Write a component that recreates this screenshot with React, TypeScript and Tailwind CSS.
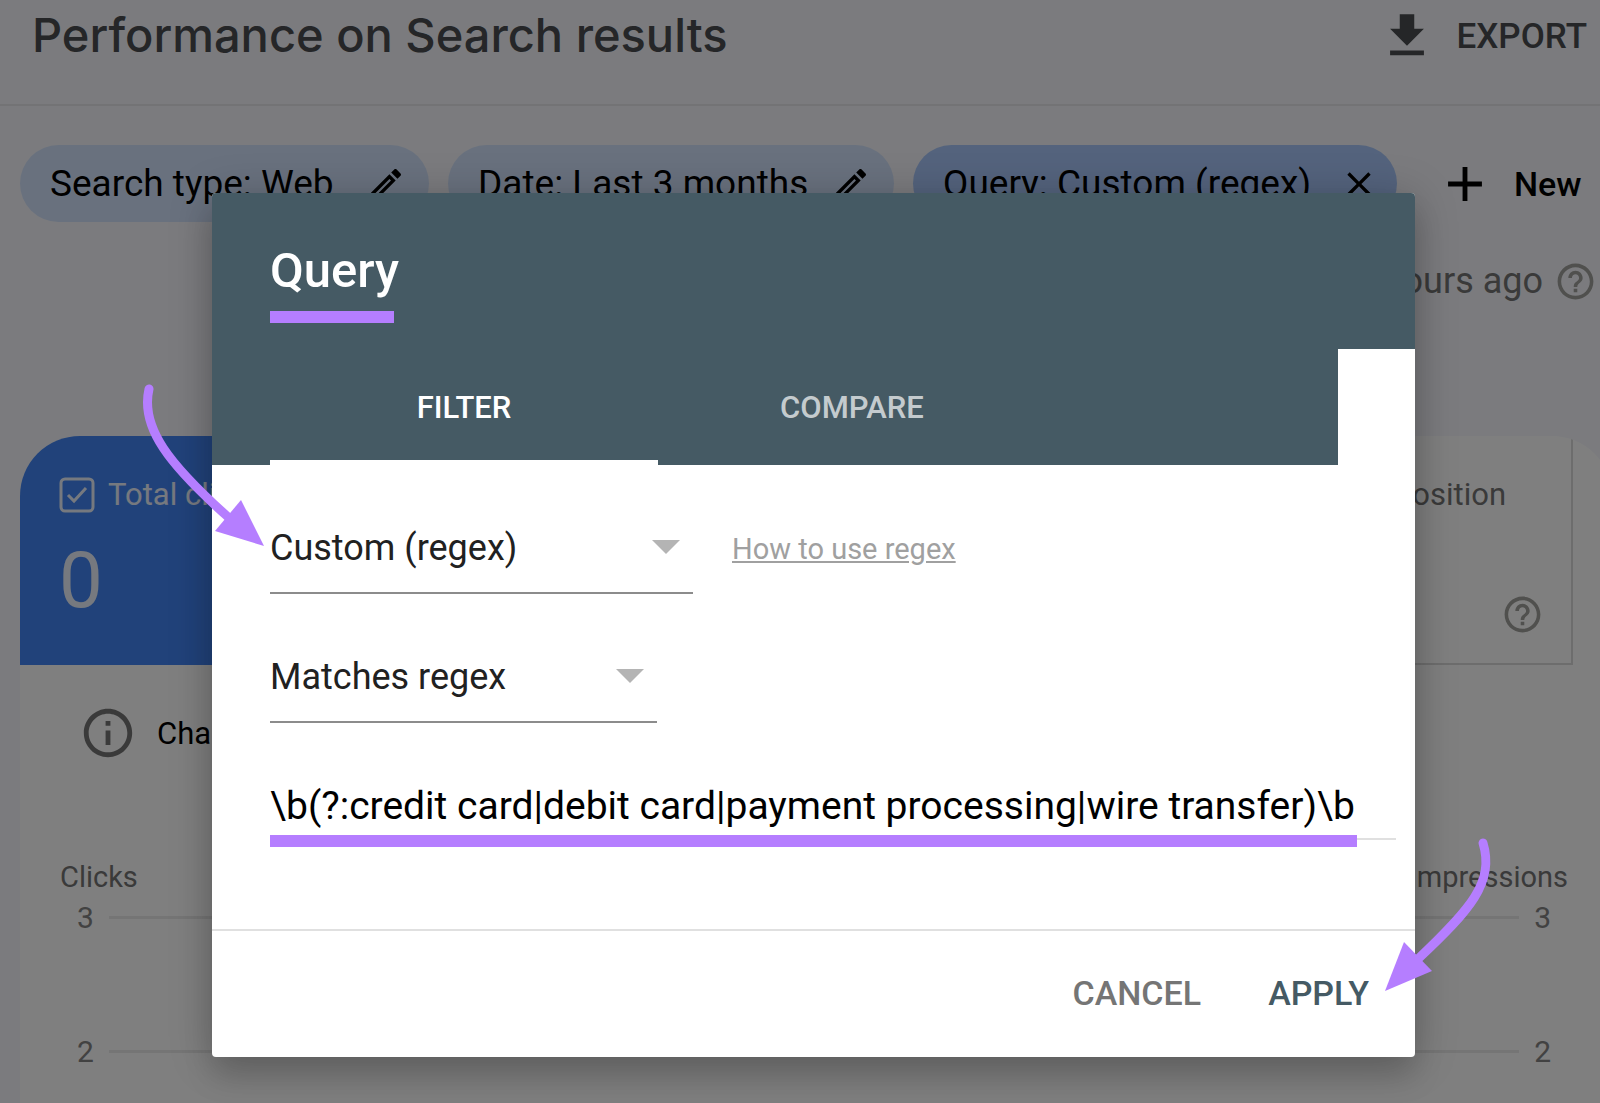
import React, { useState } from 'react';
import clsx from 'clsx';

const filters = [
  { id: 'type', label: 'Search type: Web', width: 'w-[409px] pr-[23px]', icon: 'edit' },
  { id: 'date', label: 'Date: Last 3 months', width: 'w-[446px] pr-[23px]', icon: 'edit' },
  { id: 'query', label: 'Query: Custom (regex)', width: 'w-[484px] pr-[18px]', icon: 'close' },
];

const tabs = [
  { id: 'filter', label: 'FILTER' },
  { id: 'compare', label: 'COMPARE' },
];

const icons = {
  download: 'M19 9h-4V3H9v6H5l7 7 7-7zM5 18v2h14v-2H5z',
  edit: 'M14.06 9.02l.92.92L5.92 19H5v-.92l9.06-9.06M17.66 3c-.25 0-.51.1-.7.29l-1.83 1.83 3.75 3.75 1.83-1.83c.39-.39.39-1.02 0-1.41l-2.34-2.34c-.2-.2-.45-.29-.71-.29zm-3.6 3.19L3 17.25V21h3.75L17.81 9.94l-3.75-3.75z',
  close: 'M19 6.41L17.59 5 12 10.59 6.41 5 5 6.41 10.59 12 5 17.59 6.41 19 12 13.41 17.59 19 19 17.59 13.41 12z',
  plus: 'M19 13h-6v6h-2v-6H5v-2h6V5h2v6h6v2z',
  help: 'M11 18h2v-2h-2v2zm1-16C6.48 2 2 6.48 2 12s4.48 10 10 10 10-4.48 10-10S17.52 2 12 2zm0 18c-4.41 0-8-3.59-8-8s3.59-8 8-8 8 3.59 8 8-3.59 8-8 8zm0-14c-2.21 0-4 1.79-4 4h2c0-1.1.9-2 2-2s2 .9 2 2c0 2-3 1.75-3 5h2c0-2.25 3-2.5 3-5 0-2.21-1.79-4-4-4z',
  info: 'M11 7h2v2h-2zm0 4h2v6h-2zm1-9C6.48 2 2 6.48 2 12s4.48 10 10 10 10-4.48 10-10S17.52 2 12 2zm0 18c-4.41 0-8-3.59-8-8s3.59-8 8-8 8 3.59 8 8-3.59 8-8 8z',
};

function Icon({ name, className }: { name: string; className?: string }) {
  return (
    <svg viewBox="0 0 24 24" fill="currentColor" className={clsx('shrink-0', className)} aria-hidden="true">
      <path d={icons[name as keyof typeof icons]} />
    </svg>
  );
}

interface SelectFieldProps {
  label: string;
  value: string;
  options: string[];
  className: string;
  onChange: (value: string) => void;
}

function SelectField({ label, value, options, className, onChange }: SelectFieldProps) {
  return (
    <div className={clsx('relative', className)}>
      <select
        aria-label={label}
        value={value}
        onChange={(e) => onChange(e.target.value)}
        className="h-[92px] w-full appearance-none border-b-2 border-[#8c8c8c] bg-transparent pt-0.5 text-[36px] text-[#212121] outline-none"
      >
        {options.map((option) => (
          <option key={option}>{option}</option>
        ))}
      </select>
      <svg
        viewBox="0 0 28 14"
        className="pointer-events-none absolute right-[13px] top-[38px] h-[14px] w-7"
        aria-hidden="true"
      >
        <path d="M0 0h28L14 14z" fill="#b4b4b4" />
      </svg>
    </div>
  );
}

function AxisRow({ value }: { value: number }) {
  return (
    <div className="flex h-9 items-center gap-[15px] pl-[57px] pr-[61px] text-[30px] text-[#858585]">
      <span>{value}</span>
      <div className="h-[3px] flex-1 bg-[#ebebeb]" />
      <span>{value}</span>
    </div>
  );
}

function Report() {
  return (
    <div className="flex h-full flex-col bg-[#f6f7fc]">
      <header className="flex h-[106px] items-start justify-between border-b-2 border-[#e6e7ea] pl-8 pr-[13px] text-[#4a4c50]">
        <h1 className="pt-[3px] font-[Inter] text-[47px] font-medium leading-[64px]">Performance on Search results</h1>
        <button className="flex items-center gap-[21px] pt-[7px] text-[35px] font-medium">
          <Icon name="download" className="size-[58px]" />
          <span className="pt-0.5">EXPORT</span>
        </button>
      </header>

      <div className="mt-[39px] flex items-center gap-[19px] pl-5">
        {filters.map(({ id, label, width, icon }) => (
          <button
            key={id}
            className={clsx(
              'flex h-[77px] shrink-0 items-center justify-between rounded-full pl-[30px] text-[37px] text-black',
              width,
              id === 'query' ? 'bg-[#a8c7fa]' : 'bg-[#d3e3fd]'
            )}
          >
            <span className="whitespace-nowrap">{label}</span>
            <Icon name={icon} className="size-10" />
          </button>
        ))}
        <button className="ml-5 flex shrink-0 items-center gap-5 text-[34px] font-medium text-black">
          <Icon name="plus" className="size-[58px]" />
          <span className="pt-0.5">New</span>
        </button>
      </div>

      <div className="mt-[37px] flex items-center justify-end gap-[11px] pr-[3px] text-[36px] leading-[44px] text-[#757575]">
        <span>Last updated: 4 hours ago</span>
        <Icon name="help" className="size-[43px] text-[#a0a09c]" />
      </div>

      <main className="-mr-3 ml-5 mt-[133px] flex-1 overflow-hidden rounded-t-[60px] bg-white">
        <div className="mr-[39px] grid h-[229px] grid-cols-4">
          <section className="bg-[#4285f4] pl-[39px] pt-[37px] text-white/90">
            <div className="flex items-center gap-[13px] text-[31px] leading-[44px]">
              <svg viewBox="0 0 36 36" className="size-9" fill="none" stroke="currentColor" strokeWidth="3" aria-hidden="true">
                <rect x="2" y="2" width="32" height="32" rx="4" />
                <path d="M9 18l6 6 12-13" />
              </svg>
              <h2>Total clicks</h2>
            </div>
            <p className="mt-[18px] text-[78px] leading-[92px]">0</p>
          </section>
          <section className="col-span-3 flex flex-col items-end justify-between border-b-2 border-r-2 border-[#dadada] pb-[27px] pr-[27px] pt-[37px] text-[#757575]">
            <h2 className="pr-[38px] text-[31px] leading-[44px]">Average position</h2>
            <Icon name="help" className="size-[43px] text-[#a0a09c]" />
          </section>
        </div>

        <div className="mt-[39px] flex items-center gap-5 pl-[59px] text-[31px]">
          <Icon name="info" className="size-[58px] text-[#757575]" />
          <span className="pt-0.5">Chart</span>
        </div>

        <div className="mt-[97px] flex justify-between pl-10 pr-11 text-[29px] leading-9 text-[#757575]">
          <span>Clicks</span>
          <span>Impressions</span>
        </div>
        <div className="mt-1 flex flex-col gap-[98px]">
          <AxisRow value={3} />
          <AxisRow value={2} />
        </div>
      </main>
    </div>
  );
}

function QueryDialog() {
  const [activeTab, setActiveTab] = useState('filter');
  const [kind, setKind] = useState('Custom (regex)');
  const [match, setMatch] = useState('Matches regex');
  const [pattern, setPattern] = useState(
    '\\b(?:credit card|debit card|payment processing|wire transfer)\\b'
  );

  return (
    <div
      role="dialog"
      aria-labelledby="dialog-title"
      className="w-[1203px] overflow-hidden rounded bg-white shadow-[0_22px_30px_0_rgba(0,0,0,0.12),0_4px_44px_rgba(0,0,0,0.22)]"
    >
      <div className="bg-[#455a64] pb-[26px] pl-[58px] pt-[50px]">
        <h2 id="dialog-title" className="text-[49px] font-medium leading-[56px] text-white">
          Query
        </h2>
        <div className="mt-3 h-3 w-[124px] bg-[#b57eff]" />
      </div>

      <div role="tablist" className="mr-[77px] flex h-[116px] bg-[#455a64] pl-[58px]">
        {tabs.map(({ id, label }) => (
          <button
            key={id}
            role="tab"
            aria-selected={activeTab === id}
            onClick={() => setActiveTab(id)}
            className={clsx(
              'w-[388px] border-b-[5px] pt-2 text-[31px] font-medium',
              activeTab === id ? 'border-white text-white' : 'border-transparent text-white/70'
            )}
          >
            {label}
          </button>
        ))}
      </div>

      <div className="pb-[89px] pl-[58px] pr-[19px] pt-[37px]">
        <div className="flex items-center gap-[39px]">
          <SelectField
            label="Filter type"
            value={kind}
            options={['Custom (regex)', 'Queries containing', 'Exact query']}
            className="w-[423px]"
            onChange={setKind}
          />
          <a href="#regex" className="pt-1 text-[29px] text-[#a0a0a0] underline">
            How to use regex
          </a>
        </div>
        <SelectField
          label="Match mode"
          value={match}
          options={['Matches regex', "Doesn't match regex"]}
          className="mt-[37px] w-[387px]"
          onChange={setMatch}
        />
        <div className="relative mt-[49px]">
          <input
            aria-label="Regular expression"
            value={pattern}
            onChange={(e) => setPattern(e.target.value)}
            className="block h-[68px] w-full border-b-2 border-[#e0e0e0] pt-0.5 text-[39px] text-black outline-none"
          />
          <div className="absolute -bottom-[7px] left-0 h-3 w-[1087px] bg-[#b57eff]" />
        </div>
      </div>

      <div className="flex h-32 items-center justify-end gap-[67px] border-t-2 border-[#e0e0e0] pb-0.5 pr-[46px] text-[34px] font-medium">
        <button className="text-[#757575]">CANCEL</button>
        <button className="text-[#455a64]">APPLY</button>
      </div>
    </div>
  );
}

// Callout arrows drawn above everything else
function Arrows() {
  return (
    <>
      <svg viewBox="0 0 130 170" className="pointer-events-none absolute left-[140px] top-[380px] h-[170px] w-[130px]" aria-hidden="true">
        <path d="M9 9C0 48 30 85 88 137" fill="none" stroke="#b57eff" strokeWidth="9" strokeLinecap="round" />
        <path d="M124 166L101 120 75 151z" fill="#b57eff" />
      </svg>
      <svg viewBox="0 0 120 170" className="pointer-events-none absolute left-[1380px] top-[830px] h-[170px] w-[120px]" aria-hidden="true">
        <path d="M103 13C115 52 90 80 38 129" fill="none" stroke="#b57eff" strokeWidth="9" strokeLinecap="round" />
        <path d="M5 161L24 112 52 141z" fill="#b57eff" />
      </svg>
    </>
  );
}

export default function App() {
  return (
    <div className="relative h-screen overflow-hidden font-[Roboto,sans-serif]">
      <Report />
      <div className="absolute inset-0 flex items-start justify-center bg-black/50 pl-[27px] pt-[193px]">
        <QueryDialog />
      </div>
      <Arrows />
    </div>
  );
}
